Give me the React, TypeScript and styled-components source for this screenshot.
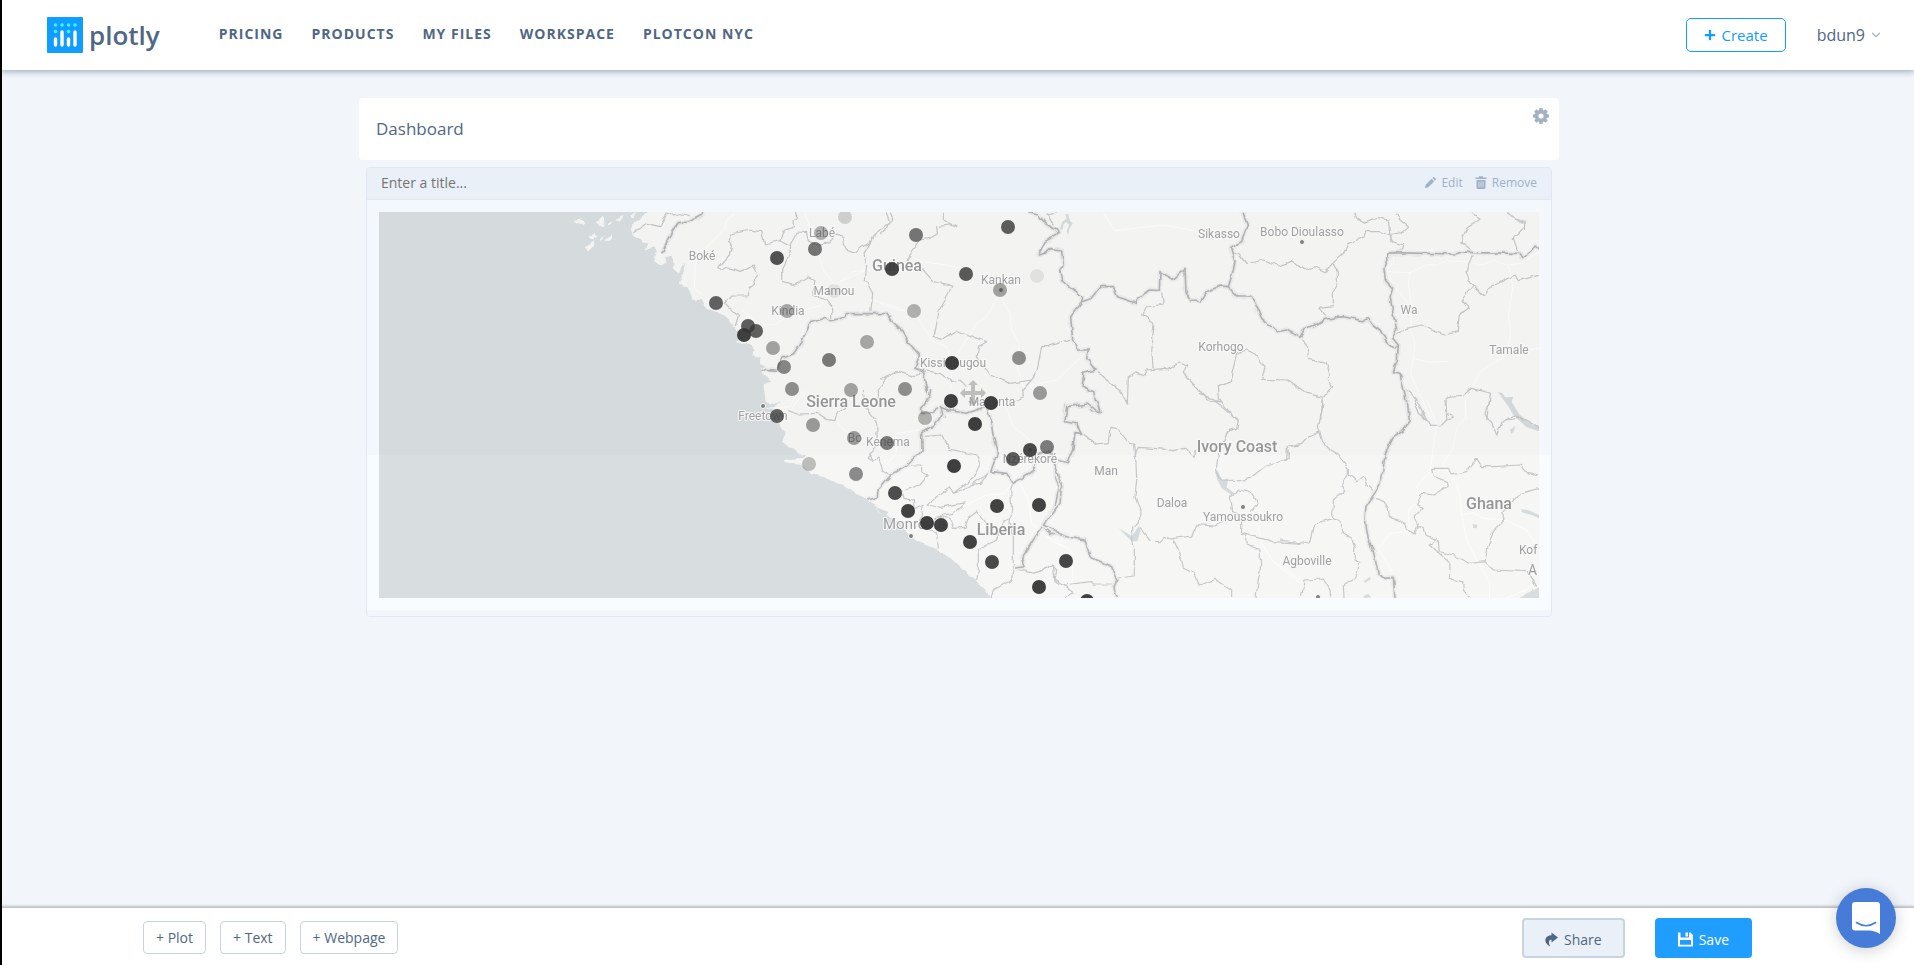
import React from "react";
import styled, { createGlobalStyle } from "styled-components";
import { FaPlus } from "react-icons/fa";
import { FiChevronDown } from "react-icons/fi";

const GlobalStyle = createGlobalStyle`
  * { box-sizing: border-box; }
  body {
    margin: 0;
    background: #f2f5fa;
    color: #506784;
    font-family: "Open Sans", "Noto Sans", sans-serif;
    font-size: 14px;
  }
  button, input { font: inherit; color: inherit; }
  button { cursor: pointer; }
`;

const Page = styled.div`
  min-height: 100vh;
  display: flex;
  flex-direction: column;
  border-left: 2px solid #000;
`;

const TopBar = styled.header`
  height: 70px;
  display: flex;
  align-items: center;
  padding: 0 31px 0 45px;
  background: #fff;
  box-shadow: 0 1px 6px 1px #a2b1c6;
  clip-path: inset(0 0 -12px 0);
`;

const Brand = styled.a`
  display: flex;
  align-items: center;
  gap: 6px;
  color: #506784;
  text-decoration: none;
  font-size: 26px;
  font-weight: 600;
  line-height: 36px;
`;

const Nav = styled.nav`
  display: flex;
  gap: 28px;
  margin-left: 59px;
  padding-bottom: 4px;
`;

const NavLink = styled.a`
  color: #506784;
  font-size: 14px;
  font-weight: 700;
  letter-spacing: 1px;
  text-decoration: none;
`;

const Account = styled.div`
  display: flex;
  align-items: center;
  gap: 31px;
  margin-left: auto;
`;

const CreateButton = styled.button`
  height: 34px;
  display: flex;
  align-items: center;
  gap: 6px;
  padding: 0 17px;
  border: 1px solid #119dff;
  border-radius: 5px;
  background: #fff;
  color: #119dff;
  font-size: 15px;
`;

const UserButton = styled.button`
  display: flex;
  align-items: center;
  gap: 4px;
  padding: 0;
  border: 0;
  background: none;
  font-size: 16px;
  svg { color: #a2b1c6; }
`;

const Main = styled.main`
  flex: 1;
  padding: 28px 20px 40px 22px;
`;

const Board = styled.div`
  max-width: 1200px;
  margin: 0 auto;
`;

const TitleCard = styled.section`
  height: 62px;
  display: flex;
  justify-content: space-between;
  align-items: center;
  padding: 0 10px 0 17px;
  border-radius: 4px;
  background: #fff;
`;

const BoardTitle = styled.h1`
  margin: 0;
  padding-bottom: 2px;
  font-size: 17px;
  font-weight: 400;
`;

const IconButton = styled.button`
  display: flex;
  align-self: flex-start;
  margin-top: 10px;
  padding: 0;
  border: 0;
  background: none;
  color: #a2b1c6;
`;

const Panel = styled.section`
  margin: 7px 7px 0;
  border: 1px solid #dfe8f3;
  border-radius: 4px;
  overflow: hidden;
`;

const PanelHeader = styled.div`
  height: 32px;
  display: flex;
  align-items: center;
  gap: 12px;
  padding: 0 14px 2px;
  border-bottom: 1px solid #dfe8f3;
  background: #e9f0f8;
`;

const PanelTitle = styled.input`
  flex: 1;
  min-width: 0;
  padding: 0;
  border: 0;
  outline: 0;
  background: none;
  font-size: 14px;
  &::placeholder { color: #757575; opacity: 1; }
`;

const PanelAction = styled.button`
  display: flex;
  align-items: center;
  gap: 5px;
  padding: 0;
  border: 0;
  background: none;
  color: #a2b1c6;
  font-size: 12px;
`;

const PanelBody = styled.div`
  padding: 12px 12px 18px;
  background: linear-gradient(#f4f8fc 255px, #f8fcff 255px 410px, #f2f6fb 410px);
`;

const MapDrawing = styled.svg`
  display: block;
  width: 100%;
  height: auto;
  path { vector-effect: non-scaling-stroke; }
`;

const MapLabel = styled.text<{ $size: number; $strong?: boolean }>`
  font-family: Roboto, "Liberation Sans", sans-serif;
  font-size: ${(p) => p.$size}px;
  font-weight: ${(p) => (p.$strong ? 500 : 400)};
  fill: ${(p) => (p.$strong ? "#969696" : "#a0a0a0")};
  stroke: #f8f8f8;
  stroke-width: 2px;
  stroke-linejoin: round;
  paint-order: stroke;
`;

const BottomBar = styled.footer`
  height: 57px;
  display: flex;
  align-items: center;
  justify-content: space-between;
  padding: 2px 162px 0 141px;
  background: #fff;
  box-shadow: 0 -1px 2px 1px #bcc0c6;
  clip-path: inset(-6px 0 0 0);
`;

const ButtonGroup = styled.div<{ $gap: number }>`
  display: flex;
  gap: ${(p) => p.$gap}px;
`;

const AddButton = styled.button`
  height: 33px;
  padding: 0 12px;
  border: 1px solid #c8d4e3;
  border-radius: 4px;
  background: #fff;
  font-size: 14px;
`;

const ActionButton = styled.button<{ $primary?: boolean }>`
  height: 40px;
  display: flex;
  align-items: center;
  gap: 6px;
  padding: 3px 21px 0;
  border: 2px solid ${(p) => (p.$primary ? "#1f9eff" : "#c8d4e3")};
  border-radius: 4px;
  background: ${(p) => (p.$primary ? "#1f9eff" : "#e9f0f8")};
  color: ${(p) => (p.$primary ? "#fff" : "#506784")};
  font-size: 14px;
`;

const ChatButton = styled.button`
  position: fixed;
  right: 18px;
  bottom: 17px;
  width: 60px;
  height: 60px;
  display: grid;
  place-items: center;
  padding: 0;
  border: 0;
  border-radius: 50%;
  background: #467cd8;
  box-shadow: 0 2px 16px rgba(0, 0, 0, 0.2);
`;

/* The map is traced on sheets; each sheet is drawn at three units to one map unit. */
type Sheet = { x: number; y: number; national: string; wiggly: string; roads: string; water: string };

const land =
  "M290,0 L265,36 L240,58 L222,72 L215,92 L222,108 L240,118 L250,126 L270,130 L252,150 L280,138 L292,150 L284,185 L300,197 L318,190 L314,170 L335,165 L345,190 L338,203 L355,218 L378,180 L372,215 L358,250 L385,262 L400,298 L425,298 L440,325 L475,335 L510,358 L530,388 L550,405 L530,430 L562,425 L585,450 L582,470 L600,470 L602,490 L620,497 L604,515 L635,545 L612,555 L618,600 L630,612 L668,598 L645,620 L640,640 L665,680 L678,698 L668,725 L695,740 L715,762 L742,760 L730,775 L675,780 L675,785 L720,790 L750,815 L810,838 L880,870 L925,900 L950,915 L955,935 L980,942 L1020,965 L1035,990 L1060,1015 L1090,1032 L1130,1045 L1180,1080 L1225,1125 L1270,1160 L1310,1214 L2850,1214 L2875,1194 L2910,1175 L2937,1160 L2980,1140 L2980,0 Z";

const islands =
  "M42,62 L58,58 L78,66 L62,70 Z M64,66 L78,70 L66,74 Z M108,68 L130,48 L132,76 L116,76 Z M86,108 L104,104 L106,114 L92,116 Z M76,142 L100,124 L102,136 L84,152 Z M120,116 L128,110 L124,124 Z M138,118 L154,106 L150,118 L142,124 Z M166,60 L188,50 L178,64 Z M214,44 L226,38 L222,54 Z M146,76 L158,70 L150,78 Z";

const sheets: Sheet[] = [
  {
    x: 181,
    y: -12,
    national:
      "M305,160 L330,110 L355,68 L385,66 L425,46 L432,36 M602,515 L620,508 L650,511 L668,475 L700,462 L725,425 L750,368 L795,355 L810,364 L855,350 L858,341 L982,341",
    wiggly:
      "M220,98 L260,70 L300,80 L322,38 M322,38 L340,48 L370,42 L395,50 M605,95 L570,90 L512,102 L508,120 L516,130 L508,165 L476,202 L486,212 L500,204 L520,206 L540,214 L580,198 L596,224 L580,236 L584,250 L568,262 L562,288 L516,288 L496,310 L520,335 L535,348 L526,378 M605,95 L614,132 L660,122 L675,90 L704,80 L702,62 L712,52 L706,38 M660,122 L692,140 L690,160 L668,205 L668,245 L705,255 L745,230 L765,240 L758,286 L800,300 L815,320 L815,362 M690,135 L712,96 L740,98 L745,122 L780,136 L810,125 L830,102 L850,115 L858,150 L885,160 L905,142 L930,130 L940,105 L985,70 L998,58 L990,38 M930,130 L912,160 L920,195 L916,240 L938,280 L932,340 M955,620 L955,570 L985,525 L1020,515",
    roads:
      "M525,40 L500,60 L495,85 L440,140 L405,192 L404,268 L430,285 M545,330 L600,375 L650,372 L700,335 L780,318 L830,250 L930,205 M735,40 L760,110 L790,210 L825,255 M930,210 L880,215 L840,245 M940,300 L1020,325 M620,625 L690,620 L712,580",
    water: "",
  },
  {
    x: 501,
    y: -12,
    national:
      "M0,341 L20,341 L32,360 L60,385 L80,420 L118,465 L105,505 L130,512 L138,560 L150,590 L125,625 L125,640 L150,640 L185,620 L192,650 M125,512 L132,512 M445,38 L475,45 L498,72 L530,90 L535,100 L495,125 L475,165 L495,160 L510,146 L545,150 L550,195 L542,210 L548,245 L580,268 L608,290 L605,308 L572,350 L578,420 L592,450 L625,450 L620,475 L645,510 L612,520 L606,558 L640,575 L650,615 L660,636 L635,632 L625,615 L555,615 L552,660 M605,308 L630,300 L660,260 L700,260 L712,290 L770,310 L775,295 L808,270 L838,272 L840,215 L880,238 L915,205 L918,280 L930,300 L960,302 L990,270 L1020,258",
    wiggly:
      "M0,105 L30,70 L18,40 M190,38 L190,58 L230,80 L230,72 L170,80 L172,102 L150,115 L120,120 L80,180 L130,210 L160,245 L215,255 L205,285 L178,330 L162,412 L190,415 L225,393 L320,425 L295,440 L292,470 L330,525 L390,550 L455,540 L470,515 L485,440 L500,440 L570,418 M130,512 L180,520 L215,545 L240,540 L260,560 M455,540 L428,570 L430,590 L400,605 M500,45 L525,75 M500,45 L530,38 M0,540 L45,512 L105,530 L130,512 M645,510 L720,570 L742,612 L745,530 L765,518 L795,528 L800,510 L855,505 L865,510 L900,485 L920,495 L910,520 L985,600 L1020,606 M820,505 L815,455 L822,370 L788,345 L800,322 L850,312 L845,280",
    roads:
      "M95,170 L130,185 L200,195 L275,215 M358,285 L320,350 L290,370 L235,460 L215,520 L212,570 M362,290 L390,340 L395,390 L418,430 L412,500 L430,560 L480,550 L530,540 L610,465 M0,310 L40,325 L105,340 L160,425 L200,440 L215,480 M670,40 L705,92 L850,75 L940,92",
    water: "M540,88 L546,66 L560,56 L556,42 L564,42 L570,62 L578,70 L568,88 L564,106 L560,94 L568,74 L558,66 L550,74 L548,90 Z",
  },
  {
    x: 821,
    y: -12,
    national:
      "M0,305 L20,275 L60,258 L85,260 L110,288 L155,288 L170,320 L185,355 L230,395 L260,390 L300,412 L312,385 L355,372 L375,358 L430,350 L490,362 L505,355 L520,375 L540,390 L560,425 L585,447 L595,435 M85,260 L98,220 L105,185 L92,145 L125,125 L142,75 L128,38 M568,158 L765,162 L790,156 L820,158 L960,160 L968,172 L990,155 L1005,138 L1016,148 M568,158 L552,205 L556,240 L578,265 L570,290 L580,345 L590,385 L578,415 L595,435 L592,480 L580,515 L600,520 L610,562 L630,660",
    wiggly:
      "M92,155 L118,165 L140,192 L190,180 L240,198 L275,182 L312,210 L345,200 L375,215 L398,190 L430,160 L445,130 L490,112 L498,95 L540,95 L570,108 M398,190 L412,212 L412,250 L400,275 L400,320 L360,325 L378,356 M465,38 L470,55 L490,68 L530,52 L565,60 L570,108 L578,125 L608,135 L604,150 L590,158 M590,38 L600,60 L625,80 L605,98 L578,102 L570,115 M815,38 L840,58 L800,85 L782,125 L820,155 L808,190 L798,215 L810,250 L820,255 L785,300 L805,325 L778,345 L772,395 L735,405 L705,395 L665,375 L620,385 L585,405 M820,255 L850,288 L870,262 L945,225 L955,242 L1016,226 M920,38 L972,68 L970,85 L940,115 L955,158 M300,412 L322,435 L325,478 L378,490 L390,520 L385,540 L395,560 L370,592 L362,660 M370,592 L320,580 L265,540 L185,538 L195,500 L165,462 L140,450 L110,460 L95,520 L95,545 L55,560 L58,595 L85,632 L115,660 M0,583 L70,608 M740,660 L738,600 L755,588 L790,586 L815,565 L872,580 L865,620 L860,660 M915,660 L960,655 L970,660 M610,562 L650,600 L680,660",
    roads:
      "M580,165 L582,185 L560,215 L630,218 L680,195 L710,195 L740,182 L800,185 L850,195 L880,180 L920,195 L970,190 L1000,165 L1016,158 M710,165 L725,182 M630,218 L625,250 L635,320 L632,390 L645,430 L640,475 L690,487 L742,484 M560,220 L580,255 L625,310 M640,475 L632,520 L662,590 L695,660 M925,195 L938,260 L925,350 L932,400 L920,465 L865,500 L840,515 L795,605 L800,660 M985,450 L1016,445",
    water: "M894,576 L908,580 L915,592 L940,590 L935,605 L968,660 L950,655 L922,615 Z M940,55 L980,62 L978,72 L960,70 Z M663,630 L672,645 L680,660 L668,658 Z",
  },
  {
    x: 341,
    y: 178,
    national:
      "M632,0 L628,20 M660,45 L668,70 L655,90 L640,108 L605,128 L606,180 L560,225 L510,255 L475,295 L472,322 L445,330 M660,52 L690,62 L740,70 L800,50 L812,90 L820,140 L832,190 L812,245 L860,250 L880,280 L905,265 L940,240 L960,190 L988,182 L1005,215 L1008,265 L1018,290 L1005,350 L968,408 L990,430 L1020,430 M968,408 L940,450 L905,505 L912,530 L885,535",
    wiggly:
      "M205,62 L230,72 L290,70 L318,88 L345,92 L350,70 L380,50 M430,0 L435,50 L470,95 L472,165 L445,200 L460,215 L475,200 L488,240 L510,255 M460,215 L450,190 M610,140 L665,135 L690,178 L770,195 L780,222 L760,265 L700,310 L690,292 L650,320 L620,345 M560,225 L605,225 L605,245 L625,255 L600,285 L555,300 M545,300 L552,325 L580,330 L582,360 L610,345 L600,400 L650,430 L655,475 M620,345 L660,352 L735,338 L700,370 L650,378 L640,400 M650,378 L690,385 L700,415 L735,412 L745,385 L770,365 L800,400 M812,245 L780,280 L750,285 M700,310 L730,300 L812,247 M880,280 L872,300 L875,360 L870,400 L880,430 L880,530 L875,570 L820,600 L812,624 M770,570 L775,545 L775,480 L830,450 L850,395 L872,385 M885,535 L940,550 L1000,525 L1005,575 L1020,585",
    roads:
      "M160,70 L210,65 L240,20 L260,0 M345,92 L400,145 M500,165 L530,130 L600,120 L625,90 M530,170 L528,190 L485,240 M700,50 L720,10 M850,30 L880,110 L930,150 M900,280 L925,330 L935,400 L980,440 L1020,455 M700,365 L800,315 L850,312 L870,290",
    water: "M468,352 L490,360 L505,366 L500,374 L480,370 Z",
  },
  {
    x: 661,
    y: 188,
    national:
      "M75,65 L80,20 L145,12 L175,36 L180,38 L170,0 M75,65 L110,72 L125,100 L105,98 L98,150 L82,188 L55,180 M40,190 L65,255 L60,310 L10,375 L40,390 L80,410 L135,420 L150,470 L215,500 L230,540 L222,565 L232,594",
    wiggly:
      "M120,95 L170,132 L205,128 L210,82 L230,85 L265,130 L284,132 L288,190 L290,240 L285,290 L300,330 L298,370 L275,385 L276,430 L283,450 L283,528 L232,534 M284,170 L295,142 L380,148 L400,152 L435,145 L460,172 L470,150 M520,0 L550,22 L595,62 L590,85 L565,92 L535,160 L528,220 L545,240 L600,242 L630,235 L680,195 L740,180 L742,140 L780,135 M300,385 L332,424 L360,425 L372,412 L385,418 L455,408 L470,374 L525,378 L550,365 M400,415 L420,460 L430,505 L462,520 L478,555 L525,538 L575,572 L575,594 M568,290 L600,270 L640,282 L656,312 L630,335 M568,290 L575,335 L605,345 L605,400 L665,415 L700,425 L780,430 M617,402 L618,432 L660,450 L662,500 L652,560 L648,594 M0,512 L35,495 L50,510 L45,540 L70,555 L155,545 L160,552 L230,552 M70,555 L102,580 L75,592 M258,0 L264,12",
    roads: "M10,380 L30,420 L85,445 L100,460 L98,530 L90,594 M630,340 L655,380 L665,430 L700,485 L780,548",
    water:
      "M526,205 L535,215 L545,240 L565,235 L560,262 L586,282 L575,285 L545,265 L530,235 Z M236,385 L262,400 L275,410 L296,378 L302,390 L292,424 L275,424 Z",
  },
  {
    x: 901,
    y: 188,
    national:
      "M382,0 L388,65 L365,95 L338,115 L315,165 L305,240 L285,278 L258,320 L255,355 L265,420 L280,455 L295,520 L312,535 L340,532 L345,594",
    wiggly:
      "M130,0 L125,35 L115,80 L128,125 L150,150 L175,165 L205,205 L205,222 L185,260 L195,270 L160,300 L158,355 L180,365 L185,395 L215,415 L225,440 L222,480 L240,488 L228,530 L190,555 L192,594 M205,222 L230,245 L250,230 L258,250 L285,278 M0,185 L28,175 L22,140 L65,130 L85,108 L118,97 M0,420 L90,432 L105,372 L158,355 M285,295 L312,305 L325,325 L328,352 L360,362 L385,388 L405,405 L415,380 L432,382 L438,405 L475,425 L478,455 L520,465 L570,490 L615,485 L640,510 L745,515 L770,560 M615,485 L625,435 L640,395 L675,358 L665,340 L720,280 L777,265 M777,228 L740,220 L720,195 L640,200 L605,200 L590,175 L560,215 L515,225 L505,205 L455,205 L460,228 L500,245 L502,258 L460,285 L425,280 L410,315 L430,322 L402,352 L412,370 L402,402 M470,418 L448,432 L510,490 L508,535 L548,545 L550,570 L570,594 M65,590 L72,540 L130,537 L150,570 L152,592 M402,0 L420,45 L455,76 L485,75 L500,60 L520,55 L515,45 L498,40 L495,0 M630,0 L615,40 L635,70 L650,108 L665,68 L700,45 L740,60 L777,82",
    roads:
      "M440,0 L470,70 L450,215 L410,260 L420,300 L385,330 L388,395 L330,400 L295,445 L345,530 M557,0 L555,55 L530,85 L520,140 L488,195 L530,250 L540,290 L545,345 L560,420 L590,480 L630,550 L628,594 M545,345 L580,338 L610,355 L675,360 L740,390 L765,430 M0,490 L70,550 L105,585 M680,594 L760,560",
    water:
      "M675,0 L690,2 L690,22 L720,45 L760,75 L777,80 L777,94 L740,82 L700,45 Z M690,90 L706,78 L702,92 L694,102 Z M724,327 L745,330 L777,345 L777,355 L755,345 L726,337 Z M578,372 L592,374 L590,385 L580,384 Z M250,545 L270,530 L272,538 L256,548 Z M250,588 L265,582 L274,592 L252,594 Z M422,38 L430,40 L434,58 L426,58 Z",
  },
];

/* [name, x, baseline, size, strong, anchor] */
const labels: [string, number, number, number, boolean?, "start"?][] = [
  ["Boké", 323, 48, 12],
  ["Labé", 443, 25, 12],
  ["Guinea", 518, 59, 16, true],
  ["Mamou", 455, 83, 12],
  ["Kindia", 409, 103, 12],
  ["Sierra Leone", 472, 195, 16, true],
  ["Freetown", 384, 208, 12],
  ["Bo", 476, 230, 12],
  ["Kenema", 509, 234, 12],
  ["Monrovia", 504, 317, 15, false, "start"],
  ["Liberia", 622, 323, 16, true],
  ["Macenta", 613, 194, 12],
  ["Kissidougou", 574, 155, 12],
  ["Kankan", 622, 72, 12],
  ["Nzérékoré", 651, 251, 12],
  ["Sikasso", 840, 26, 12],
  ["Bobo Dioulasso", 923, 24, 12],
  ["Korhogo", 842, 139, 12],
  ["Wa", 1030, 102, 12],
  ["Tamale", 1130, 142, 12],
  ["Man", 727, 263, 12],
  ["Daloa", 793, 295, 12],
  ["Yamoussoukro", 864, 309, 12],
  ["Ivory Coast", 858, 240, 16, true],
  ["Agboville", 928, 353, 12],
  ["Ghana", 1110, 297, 16, true],
  ["Kof", 1140, 342, 12, false, "start"],
  ["A", 1149, 363, 14, false, "start"],
];

const towns = [
  [384, 194], [532, 324], [622, 78], [923, 30], [864, 295], [939, 385], [651, 238],
];

/* [x, y, opacity] */
const samples = [
  [337, 91, 0.78], [369, 114, 0.8], [377, 119, 0.78], [365, 123, 0.95], [398, 46, 0.86],
  [436, 37, 0.68], [442, 21, 0.38], [466, 5, 0.2], [455, 79, 0.1], [408, 99, 0.42],
  [394, 136, 0.44], [405, 155, 0.58], [413, 177, 0.54], [450, 148, 0.65], [488, 130, 0.42],
  [472, 178, 0.44], [513, 57, 0.92], [537, 23, 0.68], [629, 15, 0.8], [587, 62, 0.82],
  [621, 78, 0.44], [658, 64, 0.1], [535, 99, 0.36], [640, 146, 0.54], [661, 181, 0.48],
  [573, 151, 0.96], [572, 189, 0.96], [612, 191, 0.96], [526, 177, 0.54], [546, 206, 0.36],
  [398, 204, 0.78], [434, 213, 0.48], [475, 226, 0.48], [508, 231, 0.64], [596, 212, 0.96],
  [634, 247, 0.8], [651, 238, 0.9], [668, 235, 0.64], [430, 252, 0.3], [477, 262, 0.56],
  [575, 254, 0.96], [516, 281, 0.88], [529, 299, 0.94], [548, 311, 0.96], [562, 313, 0.94],
  [591, 330, 0.94], [618, 294, 0.94], [660, 293, 0.94], [613, 350, 0.9], [660, 375, 0.95],
  [687, 349, 0.92], [708, 389, 0.95],
];

const OutbreakMap = () => (
  <MapDrawing viewBox="0 0 1160 386" role="img" aria-label="Map of West Africa">
    <defs>
      <filter id="rough" x="-20" y="-20" width="1200" height="426" filterUnits="userSpaceOnUse" colorInterpolationFilters="sRGB">
        <feTurbulence type="fractalNoise" baseFrequency="0.14" numOctaves="1" seed="4" />
        <feDisplacementMap in="SourceGraphic" scale="5" xChannelSelector="R" yChannelSelector="G" />
      </filter>
    </defs>
    <rect width="1160" height="386" fill="#d8dee0" />
    <g filter="url(#rough)">
      <path d={land + islands} transform="translate(181 -12) scale(.33333)" fill="#f6f6f5" stroke="#f6f6f5" />
    </g>
    {sheets.map((s) => (
      <g key={`${s.x},${s.y}`} fill="none" strokeLinejoin="round" transform={`translate(${s.x} ${s.y}) scale(.33333)`}>
        <path d={s.water} fill="#d5dbdd" />
        <path d={s.roads} stroke="#fdfdfd" strokeWidth="1" />
      </g>
    ))}
    <g filter="url(#rough)">
      {sheets.map((s) => (
        <g key={`${s.x},${s.y}`} fill="none" strokeLinejoin="round" transform={`translate(${s.x} ${s.y}) scale(.33333)`}>
          <path d={s.wiggly} stroke="#c6c7c8" strokeWidth="1.2" />
          <path d={s.national} stroke="#ececec" strokeWidth="5" />
          <path d={s.national} stroke="#b2b3b4" strokeWidth="1.6" />
        </g>
      ))}
    </g>
    <rect width="1160" height="243" fill="#000" opacity="0.013" />
    {towns.map(([x, y]) => (
      <circle key={`${x},${y}`} cx={x} cy={y} r="2.5" fill="#808080" stroke="#f8f8f8" />
    ))}
    {labels.map(([name, x, y, size, strong, anchor]) => (
      <MapLabel key={name} x={x} y={y} $size={size} $strong={strong} textAnchor={anchor ?? "middle"}>
        {name}
      </MapLabel>
    ))}
    {samples.map(([x, y, opacity]) => (
      <circle key={`${x},${y}`} cx={x} cy={y} r="7" fill="#363636" opacity={opacity} />
    ))}
    <path
      transform="translate(594 181)"
      d="M0,-13 L5,-8 H2 V-2 H8 V-5 L13,0 L8,5 V2 H2 V8 H5 L0,13 L-5,8 H-2 V2 H-8 V5 L-13,0 L-8,-5 V-2 H-2 V-8 H-5 Z"
      fill="#999"
      opacity="0.6"
    />
  </MapDrawing>
);

const LogoMark = () => (
  <svg width="36" height="36" viewBox="0 0 36 36" aria-hidden="true">
    <rect width="36" height="36" rx="1" fill="#119dff" />
    <g fill="#3ff2f5">
      {[8.5, 15, 21.5, 28].map((x) => (
        <circle key={x} cx={x} cy="8" r="1.8" />
      ))}
      <circle cx="8.5" cy="14.5" r="1.8" />
      <circle cx="21.5" cy="14.5" r="1.8" />
    </g>
    <g stroke="#fff" strokeWidth="3.4" strokeLinecap="round">
      <path d="M8.500,22 V28 M15,15 V28 M21.500,22 V28 M28,15 V28" />
    </g>
  </svg>
);

const GearIcon = () => (
  <svg width="16" height="16" viewBox="0 0 16 16" fill="currentColor" aria-hidden="true">
    {[0, 45, 90, 135].map((angle) => (
      <rect key={angle} x="6.2" width="3.6" height="16" rx="0.8" transform={`rotate(${angle} 8 8)`} />
    ))}
    <circle cx="8" cy="8" r="6.200" />
    <circle cx="8" cy="8" r="2.600" fill="#fff" />
  </svg>
);

const PencilIcon = () => (
  <svg width="11" height="11" viewBox="0 0 12 12" fill="currentColor" aria-hidden="true">
    <path d="M0,12 L0.800,8.400 L7.200,2 L10,4.800 L3.600,11.200 Z M8,1.200 L9,0.300 Q9.600,-0.200 10.200,0.400 L11.600,1.800 Q12.200,2.400 11.700,3 L10.800,4 Z" />
  </svg>
);

const TrashIcon = () => (
  <svg width="12" height="13" viewBox="0 0 12 13" aria-hidden="true">
    <path d="M0.500,1.500 H4 V0.300 H8 V1.500 H11.500 V3 H0.500 Z M1.500,4 H10.500 V11.500 Q10.500,13 9,13 H3 Q1.500,13 1.500,11.500 Z" fill="currentColor" />
    <path d="M4,5.500 V11 M6,5.500 V11 M8,5.500 V11" stroke="#e9f0f8" strokeWidth="0.700" />
  </svg>
);

const ShareIcon = () => (
  <svg width="13" height="15" viewBox="0 0 13 15" fill="currentColor" aria-hidden="true">
    <path d="M6.500,0.500 L13,5.500 L6.500,10.500 V7.800 C3.800,7.800 3.200,10.500 5.200,14.500 C1.500,12.800 0,10 0.300,7.800 C0.700,4.800 3.300,3.300 6.500,3.300 Z" />
  </svg>
);

const SaveIcon = () => (
  <svg width="15" height="15" viewBox="0 0 15 15" aria-hidden="true">
    <path
      fillRule="evenodd"
      fill="currentColor"
      d="M0,0.500 H2.500 V5.500 H11 V0.500 H12.500 L15,3 V14.500 H0 Z M2,8 V12.800 H13 V8 Z M7.500,0.500 H10 V4.500 H7.500 Z"
    />
  </svg>
);

const ChatIcon = () => (
  <svg width="28" height="32" viewBox="0 0 28 32" aria-hidden="true">
    <path d="M3,0 H25 Q28,0 28,3 V32 Q23,28.500 17,28.500 H3 Q0,28.500 0,25.500 V3 Q0,0 3,0 Z" fill="#fff" />
    <path d="M4.500,20.500 Q14,27 23.500,20.500" fill="none" stroke="#467cd8" strokeWidth="1.600" strokeLinecap="round" />
  </svg>
);

const navItems = ["PRICING", "PRODUCTS", "MY FILES", "WORKSPACE", "PLOTCON NYC"];
const addItems = ["Plot", "Text", "Webpage"];

export default function App() {
  return (
    <>
      <GlobalStyle />
      <Page>
        <TopBar>
          <Brand href="#">
            <LogoMark />
            plotly
          </Brand>
          <Nav>
            {navItems.map((item) => (
              <NavLink key={item} href="#">
                {item}
              </NavLink>
            ))}
          </Nav>
          <Account>
            <CreateButton>
              <FaPlus size={12} />
              Create
            </CreateButton>
            <UserButton>
              bdun9
              <FiChevronDown size={14} />
            </UserButton>
          </Account>
        </TopBar>
        <Main>
          <Board>
            <TitleCard>
              <BoardTitle>Dashboard</BoardTitle>
              <IconButton aria-label="Settings">
                <GearIcon />
              </IconButton>
            </TitleCard>
            <Panel>
              <PanelHeader>
                <PanelTitle aria-label="Plot title" placeholder="Enter a title..." />
                <PanelAction>
                  <PencilIcon />
                  Edit
                </PanelAction>
                <PanelAction>
                  <TrashIcon />
                  Remove
                </PanelAction>
              </PanelHeader>
              <PanelBody>
                <OutbreakMap />
              </PanelBody>
            </Panel>
          </Board>
        </Main>
        <BottomBar>
          <ButtonGroup $gap={14}>
            {addItems.map((item) => (
              <AddButton key={item}>+ {item}</AddButton>
            ))}
          </ButtonGroup>
          <ButtonGroup $gap={30}>
            <ActionButton>
              <ShareIcon />
              Share
            </ActionButton>
            <ActionButton $primary>
              <SaveIcon />
              Save
            </ActionButton>
          </ButtonGroup>
        </BottomBar>
        <ChatButton aria-label="Open chat">
          <ChatIcon />
        </ChatButton>
      </Page>
    </>
  );
}
